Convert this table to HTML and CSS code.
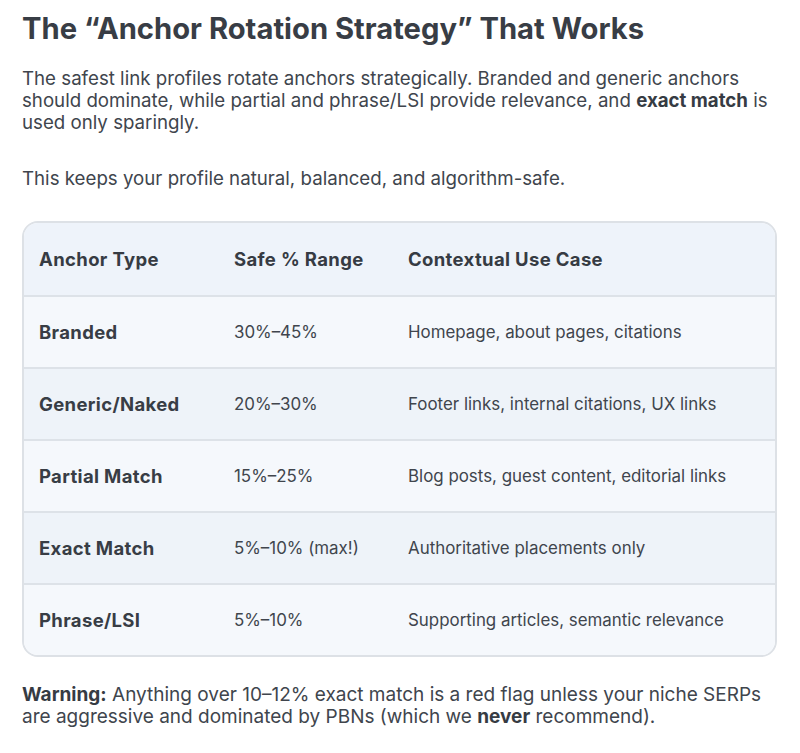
FILE: index.html
```html
<!DOCTYPE html>
<html lang="en">
<head>
<meta charset="utf-8">
<title>Anchor Rotation Strategy</title>
<link rel="stylesheet" href="styles.css">
</head>
<body>
<main class="article">
  <h2 class="title">The “Anchor Rotation Strategy” That Works</h2>
  <p class="text">The safest link profiles rotate anchors strategically. Branded and generic anchors should dominate, while partial and phrase/LSI provide relevance, and <strong>exact match</strong> is used only sparingly.</p>
  <p class="text">This keeps your profile natural, balanced, and algorithm-safe.</p>
  <div class="table-wrap">
    <table class="anchors">
      <thead>
        <tr><th>Anchor Type</th><th>Safe % Range</th><th>Contextual Use Case</th></tr>
      </thead>
      <tbody>
        <tr><td class="type">Branded</td><td>30%–45%</td><td>Homepage, about pages, citations</td></tr>
        <tr><td class="type">Generic/Naked</td><td>20%–30%</td><td>Footer links, internal citations, UX links</td></tr>
        <tr><td class="type">Partial Match</td><td>15%–25%</td><td>Blog posts, guest content, editorial links</td></tr>
        <tr><td class="type">Exact Match</td><td>5%–10% (max!)</td><td>Authoritative placements only</td></tr>
        <tr><td class="type">Phrase/LSI</td><td>5%–10%</td><td>Supporting articles, semantic relevance</td></tr>
      </tbody>
    </table>
  </div>
  <p class="text warning"><strong>Warning:</strong> Anything over 10–12% exact match is a red flag unless your niche SERPs are aggressive and dominated by PBNs (which we <strong>never</strong> recommend).</p>
</main>
</body>
</html>
```
FILE: styles.css
```css
html, body {
  margin: 0;
  padding: 0;
  background: #ffffff;
}
body {
  font-family: Inter, "Liberation Sans", sans-serif;
  color: #3b4049;
}
.article {
  padding: 11px 20px 0 22px;
}
.title {
  margin: 0;
  font-size: 29.2px;
  line-height: 36px;
  font-weight: 700;
  color: #383d45;
}
.text {
  margin: 0;
  font-size: 18.7px;
  line-height: 22px;
  color: #40454d;
}
.title + .text {
  margin-top: 21px;
}
.text + .text {
  margin-top: 34px;
}
.text strong {
  font-weight: 700;
  color: #363b43;
}
.table-wrap {
  margin-top: 31px;
  margin-right: 3px;
  border: 2px solid #dde1e6;
  border-radius: 16px;
  overflow: hidden;
}
.anchors {
  width: 100%;
  border-collapse: collapse;
  table-layout: fixed;
}
.anchors th, .anchors td {
  text-align: left;
  padding: 0 0 0 15px;
  height: 70px;
  vertical-align: middle;
}
.anchors th {
  height: 72px;
}
.anchors th:nth-child(1) { width: 180px; }
.anchors th:nth-child(2) { width: 159px; }
.anchors thead tr {
  background: #eef3fa;
}
.anchors th {
  font-size: 18.5px;
  font-weight: 700;
  letter-spacing: 0.35px;
  color: #363b43;
  border-bottom: 2px solid #dde2e8;
}
.anchors td {
  font-size: 16.9px;
  color: #40454d;
  border-bottom: 2px solid #dde2e8;
}
.anchors tbody tr:last-child td {
  border-bottom: none;
}
.anchors tbody tr:nth-child(odd) {
  background: #f5f8fc;
}
.anchors tbody tr:nth-child(even) {
  background: #eef3f9;
}
.anchors td.type {
  font-size: 18.5px;
  font-weight: 700;
  letter-spacing: 0.35px;
  color: #383d45;
}
.warning {
  margin-top: 27px;
  font-size: 19px;
  padding-right: 8px;
}
```
